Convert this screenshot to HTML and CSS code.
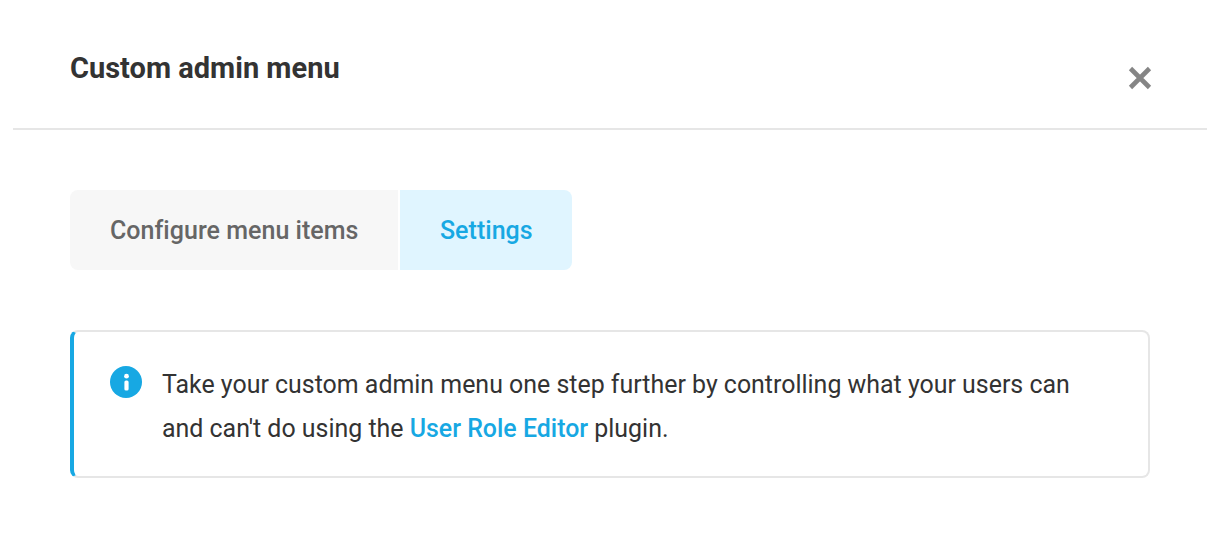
FILE: index.html
```html
<!DOCTYPE html>
<html lang="en">
<head>
    <meta charset="UTF-8">
    <title>Custom admin menu</title>
    <link rel="stylesheet" href="styles.css">
</head>
<body>

    <div class="modal">
        <div class="modal-header">
            <h1>Custom admin menu</h1>
            <button class="close-btn" aria-label="Close">
                <svg width="24" height="24" viewBox="0 0 24 24"><path d="M2.500 2.500L21.500 21.500M21.500 2.500L2.500 21.500" stroke="#858585" stroke-width="4.600" fill="none"/></svg>
            </button>
        </div>

        <div class="modal-body">
            <div class="tabs">
                <div class="tab">Configure menu items</div>
                <div class="tab tab-active">Settings</div>
            </div>

            <div class="notice">
                <svg class="notice-icon" width="32" height="32" viewBox="0 0 32 32">
                    <circle cx="16" cy="16" r="16" fill="#17a8e3"/>
                    <circle cx="16.500" cy="10.200" r="2.400" fill="#fff"/>
                    <rect x="14.400" y="14.500" width="4.200" height="10" rx="1.600" fill="#fff"/>
                </svg>
                <p>Take your custom admin menu one step further by controlling what your users can and can't do using the <a href="#">User Role Editor</a> plugin.</p>
            </div>
        </div>
    </div>

</body>
</html>
```

FILE: styles.css
```css
body {
    margin: 0;
    background-color: #fff;
    font-family: Roboto, sans-serif;
    color: #333;
}

.modal {
    width: 1194px;
    margin: 0 13px;
}

.modal-header {
    display: flex;
    justify-content: space-between;
    height: 128px;
    padding: 0 55px 0 57px;
    border-bottom: 2px solid #e6e6e6;
}

h1 {
    margin: 50px 0 0;
    font-size: 29px;
    line-height: 36px;
    font-weight: 700;
}

.close-btn {
    align-self: flex-start;
    margin-top: 66px;
    padding: 0;
    border: none;
    background: none;
    line-height: 0;
}

.modal-body {
    padding: 60px 57px 0;
}

.tabs {
    display: flex;
    gap: 2px;
}

.tab {
    height: 80px;
    padding: 0 40px;
    line-height: 82px;
    font-size: 25px;
    font-weight: 500;
    letter-spacing: 0.03px;
    color: #666;
    background-color: #f7f7f7;
    border-radius: 8px 0 0 8px;
}

.tab-active {
    padding: 0 39.500px;
    color: #17a8e3;
    background-color: #e0f5ff;
    border-radius: 0 8px 8px 0;
}

.notice {
    display: flex;
    gap: 20px;
    width: 1080px;
    box-sizing: border-box;
    margin-top: 60px;
    padding: 31px 40px 25px 36px;
    border: 2px solid #e6e6e6;
    border-left: 4px solid #17a8e3;
    border-radius: 8px;
}

.notice-icon {
    flex-shrink: 0;
    margin-top: 3px;
}

.notice p {
    margin: 0;
    font-size: 24.930px;
    line-height: 44px;
    color: #333;
}

.notice a {
    color: #17a8e3;
    font-weight: 500;
    text-decoration: none;
}
```
